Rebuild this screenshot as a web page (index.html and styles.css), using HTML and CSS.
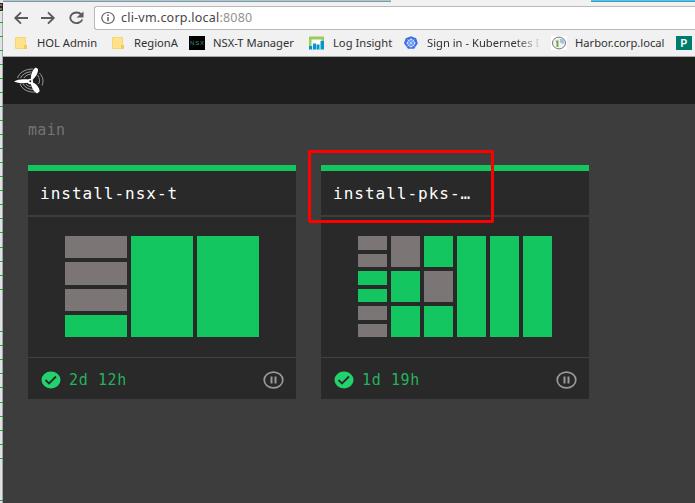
FILE: index.html
```html
<!DOCTYPE html>
<html lang="en">
<head>
<meta charset="utf-8">
<title>Concourse</title>
<link rel="stylesheet" href="styles.css">
</head>
<body>
<svg class="edge" width="3" height="503" viewBox="0 0 3 503">
  <rect width="3" height="503" fill="#e2e2e2"/>
  <path d="M0 3h3v8h-3z" fill="#262638"/><path d="M0 5h2M0 9h2" stroke="#dcc654"/><path d="M2.5 12v491" stroke="#a0a9ab"/>
  <path d="M0 22.5h3M0 36.5h3M0 50.5h3M0 64.5h3M0 78.5h3M0 92.5h3M0 106.5h3M0 120.5h3M0 134.5h3M0 148.5h3M0 162.5h3M0 176.5h3M0 190.5h3M0 204.5h3M0 218.5h3M0 232.5h3M0 247.5h3M0 261.5h3M0 275.5h3M0 289.5h3M0 331.5h3M0 345.5h3M0 359.5h3M0 373.5h3M0 387.5h3M0 402.5h3M0 416.5h3M0 430.5h3M0 444.5h3M0 458.5h3M0 500.5h3" stroke="#14b51c"/>
</svg>
<div class="window">
  <div class="tabs"><i class="tab old"></i><i class="tab active"></i><i class="tab new"></i></div>
  <div class="toolbar">
    <svg class="nav" width="91" height="24" viewBox="0 0 91 24" fill="none" stroke="#5a5a5a" stroke-width="1.9">
      <path d="M25 12H13M18 6.3L12.3 12l5.7 5.7M38 12h12M45 6.3L50.7 12l-5.7 5.7"/>
      <path d="M78.300 8.500A6.200 5.300 0 1 0 79.300 13.500"/><path d="M80.500 5.500v6h-7z" fill="#5a5a5a" stroke="none"/>
    </svg>
    <div class="address">
      <svg width="14" height="14" viewBox="0 0 14 14"><ellipse cx="7" cy="7" rx="6.2" ry="5.500" fill="none" stroke="#5d5d5d" stroke-width="1.200"/><path d="M7 6v4.200M7 3.600v1.400" stroke="#5d5d5d" stroke-width="1.500"/></svg>
      <span class="url">cli-vm.corp.local<em>:8080</em></span>
    </div>
  </div>
  <nav class="bookmarks">
    <a class="b1"><svg width="16" height="16"><path d="M2.500 2.500h10v11h-10z" fill="#ffe28a" stroke="#f4d577"/><path d="M11 10h3v4h-3z" fill="#f3ca57"/></svg><span>HOL Admin</span></a>
    <a class="b2"><svg width="16" height="16"><path d="M2.500 2.500h10v11h-10z" fill="#ffe28a" stroke="#f4d577"/><path d="M11 10h3v4h-3z" fill="#f3ca57"/></svg><span>RegionA</span></a>
    <a class="b3"><svg width="16" height="16"><path d="M0 1h16v14H0z" fill="#000"/><text x="1" y="10" class="nsx" textLength="14">NSX</text></svg><span>NSX-T Manager</span></a>
    <a class="b4"><svg width="16" height="16"><path d="M0 1.500h15v10H0z" fill="#9bcb5b"/><path d="M2.500 4.500h10V14h-10z" fill="#fff"/><path d="M0 11h3.200v3.500H0zM4 8.500h3v6H4zM7.500 9.500h3v5h-3zM11.500 6h3.500v8.500h-3.500z" fill="#0794cf"/></svg><span>Log Insight</span></a>
    <a class="b5"><svg width="16" height="16"><path d="M8 1.200l5.200 2 1.600 5-3.600 5.600H5L1 8.200l1.700-5z" fill="#3970e5"/><circle cx="8" cy="8" r="3.500" fill="none" stroke="#dce5fa"/><path d="M8 3v10M3 8h10M4.500 4.500l7 7M4.500 11.500l7-7" stroke="#dce5fa" stroke-width=".6"/></svg><span>Sign in - Kubernetes D</span></a>
    <a class="b6"><svg width="16" height="16"><path d="M0 1h16v14H0z" fill="#fff"/><ellipse cx="8" cy="8" rx="6.500" ry="5.900" fill="#f3f5f4" stroke="#777"/><path d="M8.500 4h3l2 2-1 3-3-1z" fill="#9bc4e2"/><path d="M4.500 5.500h3v6.500h-2V8z" fill="#70a84b"/></svg><span>Harbor.corp.local</span></a>
    <a class="b7"><svg width="16" height="16"><path d="M0 1h16v14H0z" fill="#007c6c"/><text x="4.500" y="12" class="pee">P</text></svg></a>
  </nav>
  <header class="topbar">
    <svg width="32" height="30" viewBox="0 0 32 30" fill="#fff">
      <path d="M1 15.500c4-2.200 9-2.700 15.500-1.700v2.700c-6 1.200-11 1-15.500-1zM18 13.500c-.6-5 1.800-10.500 4.800-12l2.200 1.500c.4 4-2.400 8-5.500 11zM19 16c4 1.500 7.800 5.500 7.600 9.500l-2.600 2c-3.500-2-5.500-6-6.500-10.500z"/>
      <circle cx="17.300" cy="15.500" r="2.700"/><circle cx="17.300" cy="15.200" r="1" fill="#1e1e1e"/>
      <g fill="none" stroke="#aaa" stroke-width=".9"><path d="M4.500 12C6.500 6.500 12 3 20 3M7.500 12c2-4 6-6 11-6.300M11 12c1.500-2.500 4-3.500 7-4M26.500 7c3.500 4 4.500 8 2.500 12.500M24.500 9c2 3 2.800 6 1 9M7 18c2.500 5.500 8 8.500 15 8M10 18c2 3.500 6 5.500 10 5.500M13 18c1 1.500 3 2.500 5 2.500"/></g>
    </svg>
  </header>
  <main class="dashboard">
    <h1>main</h1>
    <div class="cards">
      <section class="card">
        <h2>install-nsx-t</h2>
        <div class="preview three">
          <div><i></i><i></i><i></i><i class="ok"></i></div><div><i class="ok"></i></div><div><i class="ok"></i></div>
        </div>
        <footer><svg width="20" height="18" viewBox="0 0 20 18"><ellipse cx="10" cy="9" rx="9.500" ry="8.500" fill="#22d26d"/><path d="M4.500 9l3.500 3.500 7-7" fill="none" stroke="#292929" stroke-width="1.800"/></svg><time>2d 12h</time><svg class="pause" width="21" height="18" viewBox="0 0 21 18" fill="none" stroke="#999"><ellipse cx="10.500" cy="9" rx="9.300" ry="7.900" stroke-width="1.700"/><path d="M8.500 5.500v7M12.500 5.500v7" stroke-width="2"/></svg></footer>
      </section>
      <section class="card marked">
        <h2>install-pks-…</h2>
        <div class="preview six">
          <div><i></i><i></i><i class="ok"></i><i class="ok"></i><i></i><i></i></div>
          <div><i></i><i class="ok"></i><i class="ok"></i></div>
          <div><i class="ok"></i><i></i><i class="ok"></i></div>
          <div><i class="ok"></i></div><div><i class="ok"></i></div><div><i class="ok"></i></div>
        </div>
        <footer><svg width="20" height="18" viewBox="0 0 20 18"><ellipse cx="10" cy="9" rx="9.500" ry="8.500" fill="#22d26d"/><path d="M4.500 9l3.500 3.500 7-7" fill="none" stroke="#292929" stroke-width="1.800"/></svg><time>1d 19h</time><svg class="pause" width="21" height="18" viewBox="0 0 21 18" fill="none" stroke="#999"><ellipse cx="10.500" cy="9" rx="9.300" ry="7.900" stroke-width="1.700"/><path d="M8.500 5.500v7M12.500 5.500v7" stroke-width="2"/></svg></footer>
      </section>
    </div>
  </main>
</div>
</body>
</html>
```
FILE: styles.css
```css
*, *::after { box-sizing: border-box; }
body { margin: 0; width: 695px; height: 503px; overflow: hidden; display: flex; background: #3d3d3d; font-family: "Noto Sans", sans-serif; }
svg { display: block; flex: none; }
.window { width: 692px; }
.tabs { height: 2px; display: flex; background: #f1f1f1; }
.tab.old { width: 388px; background: #acc7d1; border-bottom: 1px solid #8198a3; }
.tab.active { width: 200px; }
.tab.new { flex: 1; background: #55c3e9; border-bottom: 1px solid #4199b7; }
.toolbar { height: 28px; padding-top: 4px; display: flex; background: #f1f1f1; }
.address { flex: 1; height: 24px; display: flex; align-items: center; padding-left: 6px; background: #fff; border: 1px solid #b9b9b9; border-right: 0; border-radius: 3px 0 0 3px; }
.url { margin-left: 6px; font-size: 12.5px; letter-spacing: .22px; line-height: 20px; color: #454545; white-space: nowrap; }
.url em { font-style: normal; color: #929292; }
.bookmarks { height: 27px; display: flex; align-items: center; background: #f1f1f1; padding-left: 10px; border-bottom: 1px solid #a8a8a8; }
.bookmarks a { display: flex; align-items: center; flex: none; font-size: 11.2px; line-height: 18px; color: #303030; white-space: nowrap; }
.bookmarks span { margin-left: 8px; }
.b1 { width: 97px; } .b2 { width: 79px; } .b3 { width: 120px; } .b4 { width: 94px; }
.b5 { width: 136px; margin-right: 12px; -webkit-mask-image: linear-gradient(90deg, #000 112px, transparent 140px); }
.b6 { width: 125px; }
.nsx { font: 6px "Liberation Sans", sans-serif; fill: #4d8d81; }
.pee { font: bold 10px "Liberation Sans", sans-serif; fill: #fff; }
.topbar { height: 47px; padding: 9px 0 0 10px; background: #1e1e1e; }
.dashboard { padding: 15px 0 0 25px; }
h1 { margin: 0; height: 46px; font: 15px/23px "DejaVu Sans Mono", monospace; letter-spacing: .3px; color: #747474; }
.cards { display: flex; gap: 25px; }
.card { position: relative; width: 268px; height: 234px; background: #292929; border-top: 6px solid #13c660; }
h2 { margin: 0; height: 46px; padding: 2px 0 0 12px; font: 16px/42px "DejaVu Sans Mono", monospace; letter-spacing: 1px; color: #fff; border-bottom: 2px solid #3d3d3d; white-space: nowrap; }
.preview { height: 141px; padding: 19px 37px 20px; display: grid; gap: 4px; border-bottom: 1px solid #414141; }
.three { grid-template-columns: repeat(3, 1fr); }
.six { grid-template-columns: repeat(6, 1fr); }
.preview div { display: flex; flex-direction: column; gap: 4px; }
.preview i { flex: 1; background: #7b7575; }
.preview i.ok { background: #13c660; }
footer { display: flex; align-items: center; height: 41px; padding: 2px 12px 0 13px; }
time { margin-left: 8px; font: 15px/22px "DejaVu Sans Mono", monospace; letter-spacing: .6px; color: #24b35c; }
.pause { margin-left: auto; }
.marked::after { content: ""; position: absolute; left: -13px; top: -21px; width: 186px; height: 73px; border: 3px solid #f00; border-radius: 2px; }
```
